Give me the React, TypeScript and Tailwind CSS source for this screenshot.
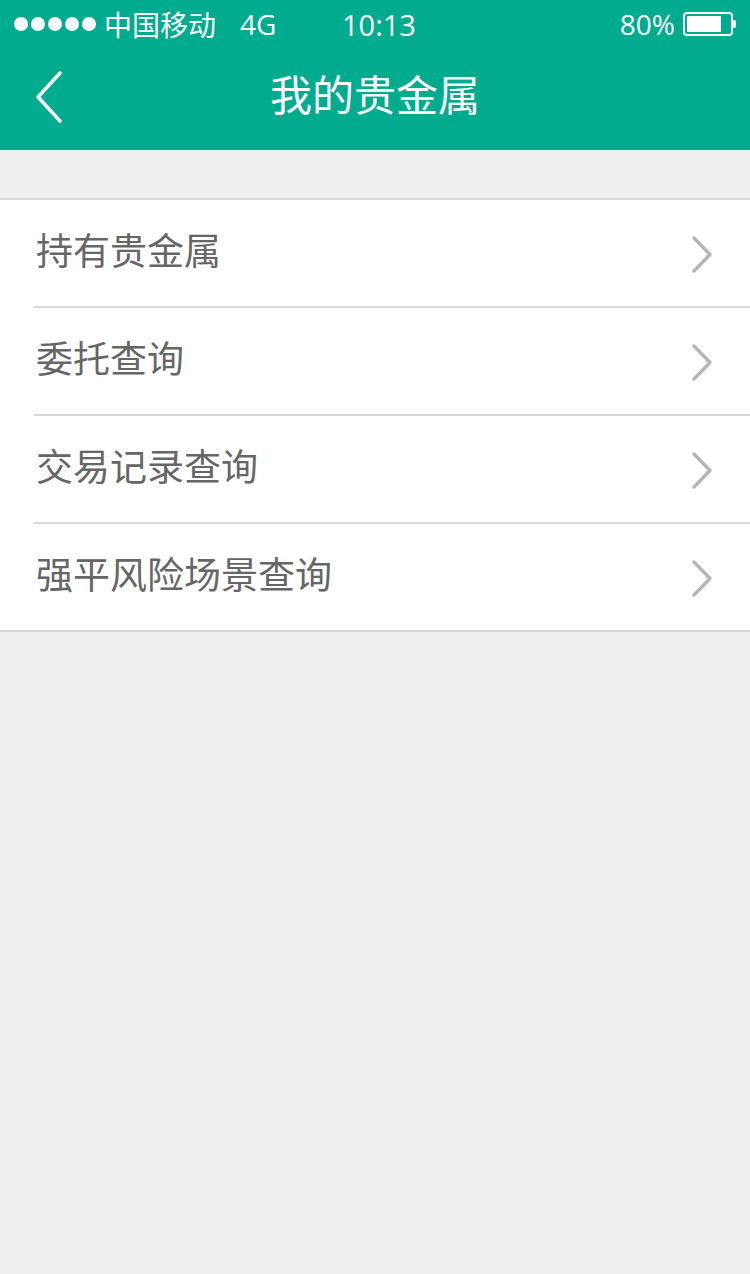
import React from "react";

const items = ["持有贵金属", "委托查询", "交易记录查询", "强平风险场景查询"];

function Chevron() {
  return (
    <svg width="28" height="40" viewBox="0 0 28 40" className="shrink-0 mt-[4px]">
      <path d="M6 3 L22 19.5 L6 36" fill="none" stroke="#b5b5b5" strokeWidth="3.4" strokeLinecap="round" strokeLinejoin="round" />
    </svg>
  );
}

export default function App() {
  return (
    <div
      className="w-[750px] h-[1274px] bg-[#efeff0] flex flex-col"
      style={{ fontFamily: '"Noto Sans CJK SC", "Noto Sans", sans-serif' }}
    >
      <div className="bg-[#00ab8e] h-[150px] flex flex-col text-white">
        <div className="h-[48px] flex items-center relative px-[14px]">
          <div className="flex items-center gap-[3px]">
            {[0, 1, 2, 3, 4].map((i) => (
              <span key={i} className="w-[14px] h-[14px] rounded-full bg-white" />
            ))}
          </div>
          <span className="ml-[8px] text-[28px] leading-none">中国移动</span>
          <span className="ml-[24px] text-[28px] leading-none" style={{ fontFamily: '"Open Sans", "Liberation Sans", sans-serif' }}>4G</span>
          <span
            className="absolute left-[342px] text-[29px] leading-none font-medium"
            style={{ fontFamily: '"Open Sans", "Liberation Sans", sans-serif' }}
          >
            10:13
          </span>
          <div className="ml-auto flex items-center">
            <span className="text-[28px] leading-none" style={{ fontFamily: '"Open Sans", "Liberation Sans", sans-serif' }}>80%</span>
            <div className="ml-[8px] w-[50px] h-[24px] border-2 border-white rounded-[4px] p-[2px] flex">
              <div className="w-[80%] h-full bg-white rounded-[1px]" />
            </div>
            <div className="w-[3px] h-[8px] bg-white rounded-r-[2px]" />
          </div>
        </div>
        <div className="flex-1 flex items-center relative">
          <svg width="40" height="56" viewBox="0 0 40 56" className="absolute left-[28px] top-[22px]">
            <path d="M32 3 L10 27 L32 51" fill="none" stroke="white" strokeWidth="3.5" strokeLinecap="round" strokeLinejoin="round" />
          </svg>
          <div className="w-full text-center text-[42px] leading-none pb-[12px]">我的贵金属</div>
        </div>
      </div>
      <div className="h-[48px]" />
      <div className="bg-white border-t-2 border-b-2 border-[#d9d9d9]">
        {items.map((t, i) => (
          <div key={t} className="pl-[34px]">
            <div
              className={
                "flex items-center pr-[34px] " +
                (i < items.length - 1 ? "h-[108px] border-b-2 border-[#d9d9d9]" : "h-[106px]")
              }
            >
              <span className="text-[37px] text-[#666666] leading-none flex-1 pl-[2px] pb-[8px]">{t}</span>
              <Chevron />
            </div>
          </div>
        ))}
      </div>
    </div>
  );
}
